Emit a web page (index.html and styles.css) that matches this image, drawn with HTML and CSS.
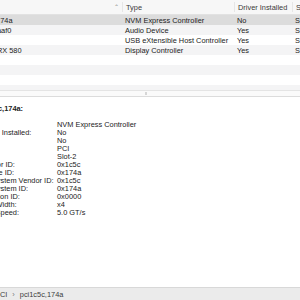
FILE: index.html
```html
<!DOCTYPE html>
<html lang="en">

<head>
  <meta charset="UTF-8">
  <meta name="viewport" content="width=device-width, initial-scale=1.0">
  <title>System Information</title>
  <link rel="stylesheet" href="styles.css">
</head>

<body>
  <div id="app">
    <div id="list">
      <div class="list-inner">
        <div class="head">
          <span class="cell head-name">Card<span class="sort">&#8963;</span></span>
          <span class="cell head-cell">Type</span>
          <span class="cell head-cell">Driver Installed</span>
          <span class="cell head-cell">Slot</span>
        </div>
        <div class="row selected">
          <span class="cell">pci1c5c,174a</span>
          <span class="cell">NVM Express Controller</span>
          <span class="cell">No</span>
          <span class="cell">Slot-2</span>
        </div>
        <div class="row odd">
          <span class="cell">pci1002,aaf0</span>
          <span class="cell">Audio Device</span>
          <span class="cell">Yes</span>
          <span class="cell">Slot-1</span>
        </div>
        <div class="row">
          <span class="cell">pci1b73</span>
          <span class="cell">USB eXtensible Host Controller</span>
          <span class="cell">Yes</span>
          <span class="cell">Slot-4</span>
        </div>
        <div class="row odd">
          <span class="cell">Radeon RX 580</span>
          <span class="cell">Display Controller</span>
          <span class="cell">Yes</span>
          <span class="cell">Slot-1</span>
        </div>
        <!-- empty filler rows -->
        <div class="row"></div>
        <div class="row odd"></div>
        <div class="row"></div>
        <div class="row odd"></div>
      </div>
    </div>
    <div id="scroller"><span class="grip"></span></div>

    <div id="detail">
      <div class="title">pci1c5c,174a:</div>
      <div class="props">
        <span class="label">Type:</span><span class="value">NVM Express Controller</span>
        <span class="label">Driver Installed:</span><span class="value">No</span>
        <span class="label">MSI:</span><span class="value">No</span>
        <span class="label">Bus:</span><span class="value">PCI</span>
        <span class="label">Slot:</span><span class="value">Slot-2</span>
        <span class="label">Vendor ID:</span><span class="value">0x1c5c</span>
        <span class="label">Device ID:</span><span class="value">0x174a</span>
        <span class="label">Subsystem Vendor ID:</span><span class="value">0x1c5c</span>
        <span class="label">Subsystem ID:</span><span class="value">0x174a</span>
        <span class="label">Revision ID:</span><span class="value">0x0000</span>
        <span class="label">Link Width:</span><span class="value">x4</span>
        <span class="label">Link Speed:</span><span class="value">5.0 GT/s</span>
      </div>
    </div>

    <div id="status">
      <span>PCI</span><span class="sep">&rsaquo;</span><span>pci1c5c,174a</span>
    </div>
  </div>
</body>

</html>
```

FILE: styles.css
```css
* {
  margin: 0;
  padding: 0;
  box-sizing: border-box;
}

body {
  width: 300px;
  height: 300px;
  overflow: hidden;
  background: #fff;
  font-family: "Liberation Sans", Arial, sans-serif;
  font-size: 7.4px;
  color: #222;
}

#app {
  display: flex;
  flex-direction: column;
  height: 300px;
}

#list {
  height: 90px;
  overflow: hidden;
}

.list-inner {
  width: 334px;
  margin-left: -34px;
}

.head,
.row {
  display: grid;
  grid-template-columns: 156px 112px 58px 1fr;
  align-items: center;
}

.head {
  height: 15px;
  background: #f7f7f7;
  border-bottom: 1px solid #e2e2e2;
  color: #3a3a3a;
}

.head-cell {
  border-left: 1px solid #e6e6e6;
  height: 10px;
  display: flex;
  align-items: center;
  padding-left: 2px;
}

.head-name {
  display: flex;
  justify-content: space-between;
  padding-right: 3px;
}

.sort {
  color: #888;
  font-size: 6px;
}

.row {
  height: 10px;
}

.row.odd {
  background: #f4f4f5;
}

.row.selected {
  background: #dcdcdc;
}

.cell {
  padding-left: 3px;
  white-space: nowrap;
  overflow: hidden;
}

#scroller {
  height: 7px;
  border-top: 1px solid #e4e4e4;
  border-bottom: 1px solid #dcdcdc;
  background: #fafafa;
  display: flex;
  justify-content: center;
}

.grip {
  width: 2px;
  height: 3px;
  margin: 1px 0 0 -8px;
  background: #d6d6d6;
}

#detail {
  flex: 1;
  margin-left: -25px;
  padding-top: 7px;
}

.title {
  font-weight: bold;
  height: 9px;
  line-height: 9px;
  margin-bottom: 8px;
}

.props {
  display: grid;
  grid-template-columns: 77px 1fr;
  grid-auto-rows: 8px;
  align-items: center;
  padding-left: 5px;
  line-height: 8px;
}

#status {
  height: 13px;
  background: #ebebeb;
  border-top: 1px solid #d8d8d8;
  display: flex;
  align-items: center;
  margin-left: -5px;
  color: #3c3c3c;
}

.sep {
  margin: 0 5px;
  color: #777;
}
```
